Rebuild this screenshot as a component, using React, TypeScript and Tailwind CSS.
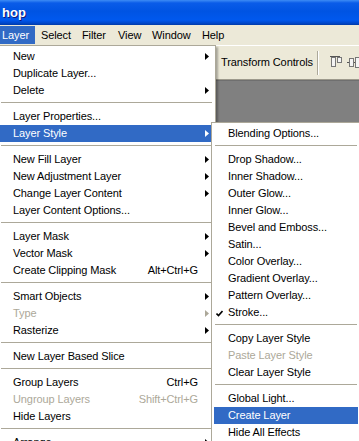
import React from "react"

type Item =
	| "sep"
	| {
			label: string
			shortcut?: string
			sub?: boolean
			disabled?: boolean
			active?: boolean
			checked?: boolean
	  }

const layerMenu: Item[] = [
	{ label: "New", sub: true },
	{ label: "Duplicate Layer..." },
	{ label: "Delete", sub: true },
	"sep",
	{ label: "Layer Properties..." },
	{ label: "Layer Style", sub: true, active: true },
	"sep",
	{ label: "New Fill Layer", sub: true },
	{ label: "New Adjustment Layer", sub: true },
	{ label: "Change Layer Content", sub: true },
	{ label: "Layer Content Options..." },
	"sep",
	{ label: "Layer Mask", sub: true },
	{ label: "Vector Mask", sub: true },
	{ label: "Create Clipping Mask", shortcut: "Alt+Ctrl+G" },
	"sep",
	{ label: "Smart Objects", sub: true },
	{ label: "Type", sub: true, disabled: true },
	{ label: "Rasterize", sub: true },
	"sep",
	{ label: "New Layer Based Slice" },
	"sep",
	{ label: "Group Layers", shortcut: "Ctrl+G" },
	{ label: "Ungroup Layers", shortcut: "Shift+Ctrl+G", disabled: true },
	{ label: "Hide Layers" },
	"sep",
	{ label: "Arrange", sub: true }
]

const styleMenu: Item[] = [
	{ label: "Blending Options..." },
	"sep",
	{ label: "Drop Shadow..." },
	{ label: "Inner Shadow..." },
	{ label: "Outer Glow..." },
	{ label: "Inner Glow..." },
	{ label: "Bevel and Emboss..." },
	{ label: "Satin..." },
	{ label: "Color Overlay..." },
	{ label: "Gradient Overlay..." },
	{ label: "Pattern Overlay..." },
	{ label: "Stroke...", checked: true },
	"sep",
	{ label: "Copy Layer Style" },
	{ label: "Paste Layer Style", disabled: true },
	{ label: "Clear Layer Style" },
	"sep",
	{ label: "Global Light..." },
	{ label: "Create Layer", active: true },
	{ label: "Hide All Effects" }
]

function Arrow({ color }: { color: string }) {
	return (
		<svg width="4" height="7" viewBox="0 0 4 7" className="absolute right-[4px] top-[5px]">
			<polygon points="0,0 4,3.5 0,7" fill={color} />
		</svg>
	)
}

function Menu({ items, textPad }: { items: Item[]; textPad: string }) {
	return (
		<div className="flex flex-col">
			{items.map((item, i) => {
				if (item === "sep") {
					return (
						<div key={i} className="h-[9px] pt-[3px] px-[1px]">
							<div className="h-px bg-[#aca899]" />
						</div>
					)
				}
				const color = item.active ? "#ffffff" : item.disabled ? "#aca899" : "#000000"
				return (
					<div
						key={i}
						className={`relative h-[17px] leading-[17px] whitespace-nowrap ${textPad} ${
							item.active ? "bg-[#316ac5] text-white" : item.disabled ? "text-[#aca899]" : "text-black"
						}`}
					>
						{item.checked && (
							<svg width="7" height="7" viewBox="0 0 7 7" className="absolute left-[2px] top-[6px]">
								<polyline points="0.5,3.5 2.5,5.5 6.5,1" fill="none" stroke="#000" strokeWidth="1.6" />
							</svg>
						)}
						{item.label}
						{item.shortcut && (
							<span className="absolute right-[15px] top-0">{item.shortcut}</span>
						)}
						{item.sub && <Arrow color={color} />}
					</div>
				)
			})}
		</div>
	)
}

export default function App() {
	const menuBar = [
		{ label: "Layer", w: "w-[35px] pl-[2px]", active: true },
		{ label: "Select", w: "w-[41px] pl-[6px]" },
		{ label: "Filter", w: "w-[36px] pl-[6px]" },
		{ label: "View", w: "w-[34px] pl-[6px]" },
		{ label: "Window", w: "w-[50px] pl-[6px]" },
		{ label: "Help", w: "w-[40px] pl-[6px]" }
	]

	return (
		<div className="relative w-[359px] h-[441px] overflow-hidden flex flex-col bg-[#808080] font-['Liberation_Sans',Arial,sans-serif] text-[11px] tracking-[-0.1px]">
			{/* title bar */}
			<div className="h-[25px] shrink-0 bg-[linear-gradient(to_bottom,#3d8cf5_0%,#0a5ce8_12%,#0054e3_45%,#0058ee_80%,#0048cc_92%,#003aa8_100%)] pl-[2px] flex items-center">
				<span className="text-white font-bold text-[13px] tracking-normal [text-shadow:1px_1px_0_#0f1a7a]">hop</span>
			</div>

			{/* menu bar */}
			<div className="h-[20px] shrink-0 bg-[#ece9d8] flex items-center whitespace-nowrap">
				{menuBar.map(m => (
					<div
						key={m.label}
						className={`${m.w} shrink-0 h-[18px] leading-[18px] ${m.active ? "bg-[#316ac5] text-white" : "text-black"}`}
					>
						{m.label}
					</div>
				))}
			</div>

			{/* options bar */}
			<div className="h-[35px] shrink-0 bg-[#ece9d8] border-t border-white border-b border-b-[#9d9a8c] flex items-center whitespace-nowrap">
				<div className="ml-[221px] w-[86px] shrink-0 text-black">Transform Controls</div>
				<div className="ml-[10px] shrink-0 w-[2px] h-[24px] border-l border-[#aca899] border-r border-r-white" />
				<svg width="30" height="14" viewBox="0 0 30 14" className="ml-[11px] mt-[1px] shrink-0">
					<line x1="0" y1="0.5" x2="10" y2="0.5" stroke="#555" />
					<rect x="1.5" y="1.5" width="4" height="9" fill="#f4f4f4" stroke="#777" />
					<rect x="7.5" y="1.5" width="4" height="5" fill="#f4f4f4" stroke="#777" />
					<line x1="17" y1="6.5" x2="30" y2="6.5" stroke="#555" />
					<rect x="19.5" y="2.5" width="4" height="8" fill="#f4f4f4" stroke="#777" />
					<rect x="25.5" y="1.5" width="4" height="10" fill="#f4f4f4" stroke="#777" />
				</svg>
			</div>

			{/* canvas area */}
			<div className="flex-1 bg-[#808080] border-t border-[#6f6f6f]" />

			{/* Layer dropdown */}
			<div className="absolute left-[-3px] top-[45px] w-[219px] bg-white border border-[#aca899] pt-[2px] px-[1px] shadow-[2px_2px_2px_rgba(0,0,0,0.3)]">
				<div className="px-[1px]">
					<Menu items={layerMenu} textPad="pl-[13px]" />
				</div>
			</div>

			{/* Layer Style submenu */}
			<div className="absolute left-[211px] top-[122px] w-[150px] bg-white border border-[#aca899] pt-[2px] px-[2px] shadow-[2px_2px_2px_rgba(0,0,0,0.3)]">
				<Menu items={styleMenu} textPad="pl-[14px]" />
			</div>
		</div>
	)
}
